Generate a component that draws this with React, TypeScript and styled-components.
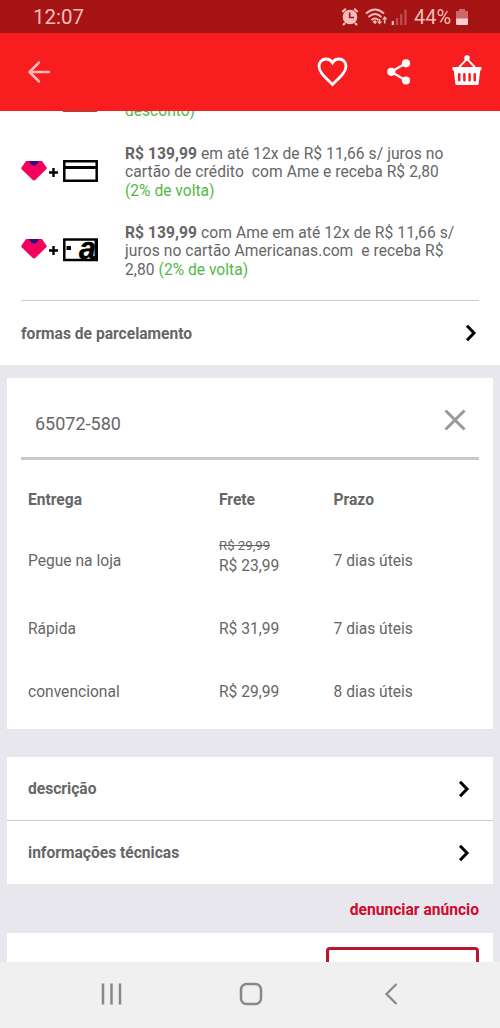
import React from "react";
import styled, { createGlobalStyle } from "styled-components";

const GlobalStyle = createGlobalStyle`
  * { box-sizing: border-box; }
  html, body { margin: 0; padding: 0; }
  body { font-family: Roboto, "Liberation Sans", sans-serif; color: #666; }
  svg { display: block; flex: none; }
`;

const Screen = styled.div`
  display: flex;
  flex-direction: column;
  width: 500px;
  height: 1028px;
  overflow: hidden;
  background: #e8e7ee;
`;

const StatusBar = styled.header`
  flex: none;
  display: flex;
  align-items: center;
  height: 33px;
  padding: 1px 32px 0 33px;
  background: #a61313;
  color: #f6bcbc;
  font-size: 20.5px;
  line-height: 32px;
`;

const StatusIcons = styled.div`
  display: flex;
  align-items: center;
  margin-left: auto;
`;

const Battery = styled.span`
  width: 38px;
  margin: 0 4px 0 6px;
  font-size: 20px;
  white-space: nowrap;
`;

const AppBar = styled.nav`
  flex: none;
  display: flex;
  align-items: center;
  height: 78px;
  padding: 0 18px 0 27px;
  background: #f81d1f;
`;

const Actions = styled.div`
  display: flex;
  align-items: center;
  gap: 40px;
  margin-left: auto;
`;

const ShareButton = styled.div`
  margin: 0 1px 0 -1px;
`;

const BasketButton = styled.div`
  padding-bottom: 3px;
`;

const Content = styled.main`
  flex: 1;
  min-height: 0;
  overflow: hidden;
`;

const Payments = styled.section`
  height: 254px;
  padding: 0 21px;
  background: #fff;
  overflow: hidden;
`;

const PaymentRow = styled.div<{ $height: number }>`
  display: flex;
  height: ${(p) => p.$height}px;
`;

const PaymentIcon = styled.div<{ $top?: number }>`
  width: 104px;
  padding-top: ${(p) => p.$top ?? 0}px;
`;

const CutCard = styled.div`
  width: 34px;
  height: 1px;
  margin-left: 42px;
  background: #8d4a4a;
`;

const PaymentText = styled.div<{ $shift?: number }>`
  margin-top: ${(p) => p.$shift ?? 1}px;
  font-size: 15.6px;
  letter-spacing: 0.075px;
  line-height: 18.4px;
  white-space: pre;
`;

const Green = styled.span`
  color: #51b949;
  letter-spacing: 0;
`;

const Line = styled.div`
  display: flex;
`;

const LinkRow = styled.div<{ $height: number; $inset: number; $line?: boolean }>`
  display: flex;
  align-items: center;
  justify-content: space-between;
  height: ${(p) => p.$height}px;
  padding: 0 ${(p) => p.$inset + 2}px 0 ${(p) => p.$inset}px;
  border-top: ${(p) => (p.$line ? "1px solid #c9c9c9" : "none")};
  font-size: 15.6px;
  font-weight: 700;
`;

const LinkLabel = styled.span`
  padding-top: 1px;
`;

const Card = styled.section<{ $top: number; $height?: number }>`
  margin: ${(p) => p.$top}px 7px 0;
  height: ${(p) => (p.$height ? `${p.$height}px` : "auto")};
  background: #fff;
`;

const ZipField = styled.div`
  display: flex;
  align-items: center;
  justify-content: space-between;
  height: 82px;
  margin: 0 14px;
  padding: 5px 13px 0 14px;
  border-bottom: 3px solid #c9c9c9;
  font-size: 18px;
`;

const ZipValue = styled.span`
  padding-top: 6px;
`;

const Rates = styled.div`
  display: grid;
  grid-template-columns: 191px 114.5px 1fr;
  grid-template-rows: 80px 44px 91px 36px;
  padding-left: 21px;
  font-size: 15.6px;
`;

const Cell = styled.div<{ $bold?: boolean; $raised?: boolean }>`
  display: flex;
  flex-direction: column;
  justify-content: center;
  padding-top: ${(p) => (p.$bold ? 1.5 : 0)}px;
  padding-bottom: ${(p) => (p.$raised ? 12 : 0)}px;
  line-height: ${(p) => (p.$raised ? 20 : 19.5)}px;
  font-weight: ${(p) => (p.$bold ? 700 : 400)};
`;

const OldPrice = styled.s`
  font-size: 13.2px;
`;

const Report = styled.div`
  height: 49px;
  padding-right: 21px;
  color: #cf0a2c;
  font-size: 15.6px;
  font-weight: 700;
  line-height: 53px;
  text-align: right;
`;

const OutlineButton = styled.div`
  width: 153px;
  height: 50px;
  margin-left: auto;
  border: 3px solid #b81730;
  border-radius: 4px;
`;

const ButtonHolder = styled.div`
  padding: 14px 14px 0;
`;

const SystemNav = styled.footer`
  flex: none;
  display: flex;
  align-items: center;
  height: 66px;
  padding: 0 0 2px 100px;
  background: #f0f0f0;
`;

const NavKey = styled.div<{ $width: number }>`
  width: ${(p) => p.$width}px;
`;

const Chevron = () => (
  <svg width="12" height="18" viewBox="0 0 12 18" fill="none" stroke="#000" strokeWidth="3">
    <path d="M2 1.8 9 9 2 16.2" />
  </svg>
);

const Gem = () => (
  <>
    <path d="M5 1h16l4.500 6.500q.500 1-.300 1.800L14.500 19.800q-1.500 1.200-3 0L.700 9.300Q0 8.500.500 7.500Z" fill="#f5005e" />
    <path d="M8 1h10l-2.500 3.700q-2.500 1.500-5 0Z" fill="#28108a" />
    <path d="M28 12.500h9M32.500 8v9" stroke="#000" strokeWidth="2.400" />
  </>
);

const CreditIcon = () => (
  <svg width="78" height="23" viewBox="0 0 78 23" fill="none">
    <Gem />
    <path d="M43.300 1.300h32.400v19.400H43.300Z" stroke="#000" strokeWidth="2.500" />
    <path d="M42 7.400h35" stroke="#000" strokeWidth="3" />
  </svg>
);

const StoreCardIcon = () => (
  <svg width="78" height="24" viewBox="0 0 78 24" fill="none">
    <Gem />
    <path d="M43.300 1.500h32.400v20.500H43.300Z" stroke="#000" strokeWidth="2.500" />
    <path d="M73.500 1H77v22H70l3.500-4Z" fill="#000" />
    <path d="M45.500 8h4.500v4H45.500Z" fill="#000" />
    <text x="58" y="21" fill="#000" stroke="#000" strokeWidth=".5" fontFamily="Liberation Sans, sans-serif" fontSize="31" fontWeight="700" fontStyle="italic" textLength="17" lengthAdjust="spacingAndGlyphs">a</text>
  </svg>
);

const BackIcon = () => (
  <svg width="24" height="24" viewBox="0 0 24 24" fill="none" stroke="#fbb" strokeWidth="2.500" strokeLinecap="round">
    <path d="M22 12H2.500M12 2.500 2.500 12 12 21.500" />
  </svg>
);

const HeartIcon = () => (
  <svg width="31" height="30" viewBox="0 0 31 30" fill="none" stroke="#fff" strokeWidth="2.800">
    <path d="M15.500 27.500C9 21.100 2 15.600 2 9.200 2 5 5.200 2 9 2c2.700 0 5 1.300 6.500 3.800C17 3.300 19.300 2 22 2c3.800 0 7 3 7 7.200 0 6.400-7 11.900-13.500 18.300Z" />
  </svg>
);

const ShareIcon = () => (
  <svg width="24" height="26" viewBox="0 0 24 26" fill="#fff">
    <path d="M19 4.300 4 12.800l15 8.700" fill="none" stroke="#fff" strokeWidth="2.200" />
    <circle cx="19" cy="4.300" r="4.100" />
    <circle cx="4.300" cy="12.800" r="4.100" />
    <circle cx="19" cy="21.500" r="4.100" />
  </svg>
);

const BasketIcon = () => (
  <svg width="30" height="31" viewBox="0 0 31 32" fill="#fff">
    <path d="M7 13 15.500 4 24 13" fill="none" stroke="#fff" strokeWidth="2" />
    <circle cx="15.500" cy="3.200" r="2.900" />
    <path d="M.500 12.500h30v3.300h-1.300L27.500 30q-.200 1-1.300 1H4.800q-1.100 0-1.300-1L1.800 15.800H.500Z" />
    <path d="M7.500 20v6M12.800 20v6M18.200 20v6M23.500 20v6" stroke="#f81d1f" strokeWidth="2.600" strokeLinecap="round" />
  </svg>
);

const StatusGlyphs = () => (
  <svg width="67" height="20" viewBox="0 0 67 20" fill="none" stroke="#f6bcbc">
    <circle cx="9" cy="10" r="7.300" fill="#f6bcbc" stroke="none" />
    <path d="m1.300 5 3.500-3.200M16.700 5l-3.500-3.200M4 16l-2 2M14 16l2 2" strokeWidth="2.200" />
    <path d="M8.700 5.500v5H13" stroke="#a61313" strokeWidth="1.600" />
    <path d="M25 6.500q9-8 18 0M27.500 10q6.500-6 13 0M30.500 13q3.500-3 7 0" strokeWidth="2" />
    <path d="m31.500 14.500 2.500-1.500 2 2-2 2.200Z" fill="#f6bcbc" stroke="none" />
    <path d="M38.500 12v4M43.700 16.500v-4" strokeWidth="1.600" />
    <path d="m35.800 14.500 2.700 3 2.700-3ZM41 12.500l2.700-3.500 2.700 3.500Z" fill="#f6bcbc" stroke="none" />
    <path d="M51.800 14v4" strokeWidth="2.200" />
    <path d="M56 11v7M60.200 7v11M64.500 2.500V18" strokeWidth="2.200" opacity=".35" />
  </svg>
);

const BatteryIcon = () => (
  <svg width="12" height="18" viewBox="0 0 12 18" fill="#f6bcbc">
    <path d="M3 1h6v2h3v8H0V3h3Z" opacity=".5" />
    <path d="M0 10.500h12V16q0 1-1 1H1q-1 0-1-1Z" fill="#fbd0d0" />
  </svg>
);

const rates = [
  { name: "Pegue na loja", old: "R$ 29,99", price: "R$ 23,99", time: "7 dias úteis" },
  { name: "Rápida", price: "R$ 31,99", time: "7 dias úteis" },
  { name: "convencional", price: "R$ 29,99", time: "8 dias úteis" },
];

export default function App() {
  return (
    <Screen>
      <GlobalStyle />
      <StatusBar>
        12:07
        <StatusIcons>
          <StatusGlyphs />
          <Battery>44%</Battery>
          <BatteryIcon />
        </StatusIcons>
      </StatusBar>
      <AppBar>
        <BackIcon />
        <Actions>
          <HeartIcon />
          <ShareButton><ShareIcon /></ShareButton>
          <BasketButton><BasketIcon /></BasketButton>
        </Actions>
      </AppBar>
      <Content>
        <Payments>
          <PaymentRow $height={33}>
            <PaymentIcon><CutCard /></PaymentIcon>
            <PaymentText $shift={-9}><Green>desconto)</Green></PaymentText>
          </PaymentRow>
          <PaymentRow $height={79}>
            <PaymentIcon $top={16}><CreditIcon /></PaymentIcon>
            <PaymentText>
              <Line><b>R$ 139,99</b><span>{" em até 12x de R$ 11,66 s/ juros no"}</span></Line>
              <Line>{"cartão de crédito  com Ame e receba R$ 2,80"}</Line>
              <Line><Green>(2% de volta)</Green></Line>
            </PaymentText>
          </PaymentRow>
          <PaymentRow $height={77}>
            <PaymentIcon $top={15}><StoreCardIcon /></PaymentIcon>
            <PaymentText>
              <Line><b>R$ 139,99</b><span>{" com Ame em até 12x de R$ 11,66 s/"}</span></Line>
              <Line>{"juros no cartão Americanas.com  e receba R$"}</Line>
              <Line><span>{"2,80 "}</span><Green>(2% de volta)</Green></Line>
            </PaymentText>
          </PaymentRow>
          <LinkRow $height={65} $inset={0} $line>
            <LinkLabel>formas de parcelamento</LinkLabel>
            <Chevron />
          </LinkRow>
        </Payments>
        <Card $top={13} $height={351}>
          <ZipField>
            <ZipValue>65072-580</ZipValue>
            <svg width="22" height="22" viewBox="0 0 22 22" stroke="#999" strokeWidth="3">
              <path d="m1.500 1.500 19 19M20.500 1.500l-19 19" />
            </svg>
          </ZipField>
          <Rates>
            <Cell $bold>Entrega</Cell>
            <Cell $bold>Frete</Cell>
            <Cell $bold>Prazo</Cell>
            {rates.map((r) => (
              <React.Fragment key={r.name}>
                <Cell>{r.name}</Cell>
                <Cell $raised={Boolean(r.old)}>
                  {r.old && <OldPrice>{r.old}</OldPrice>}
                  <span>{r.price}</span>
                </Cell>
                <Cell>{r.time}</Cell>
              </React.Fragment>
            ))}
          </Rates>
        </Card>
        <Card $top={28}>
          <LinkRow $height={63} $inset={21}><LinkLabel>descrição</LinkLabel><Chevron /></LinkRow>
          <LinkRow $height={64} $inset={21} $line><LinkLabel>informações técnicas</LinkLabel><Chevron /></LinkRow>
        </Card>
        <Report>denunciar anúncio</Report>
        <Card $top={0} $height={90}>
          <ButtonHolder><OutlineButton /></ButtonHolder>
        </Card>
      </Content>
      <SystemNav>
        <NavKey $width={139}>
          <svg width="22" height="22" viewBox="0 0 22 22" stroke="#888" strokeWidth="2.500">
            <path d="M3 .500v21M11.500 .500v21M20 .500v21" />
          </svg>
        </NavKey>
        <NavKey $width={145}>
          <svg width="24" height="24" viewBox="0 0 24 24" fill="none" stroke="#888" strokeWidth="2.500">
            <rect x="2" y="2" width="20" height="20" rx="5.500" />
          </svg>
        </NavKey>
        <svg width="14" height="22" viewBox="0 0 14 22" fill="none" stroke="#888" strokeWidth="2.200">
          <path d="M12.500 1 2.500 11l10 10" />
        </svg>
      </SystemNav>
    </Screen>
  );
}
